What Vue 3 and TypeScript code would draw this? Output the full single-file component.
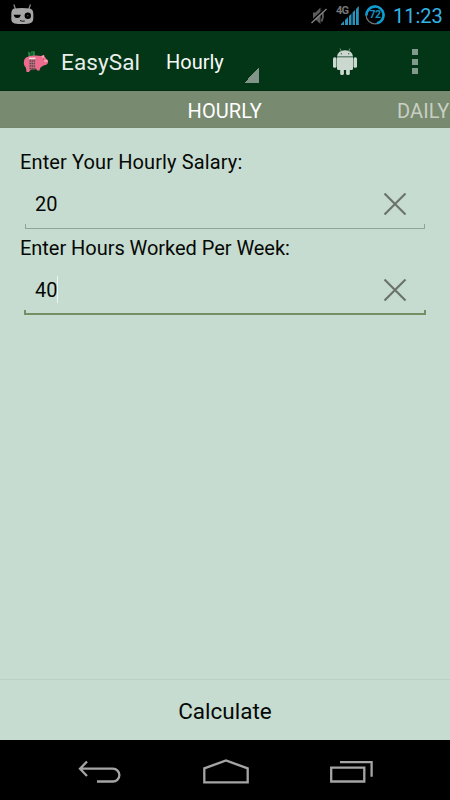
<script setup lang="ts">
import { ref } from 'vue'

interface Field {
  id: string
  label: string
  value: string
  focused: boolean
}

const fields = ref<Field[]>([
  { id: 'salary', label: 'Enter Your Hourly Salary:', value: '20', focused: false },
  { id: 'hours', label: 'Enter Hours Worked Per Week:', value: '40', focused: true },
])

function clearField(field: Field): void {
  field.value = ''
}
</script>

<template>
  <div class="screen">
    <header class="status">
      <svg class="cid" width="24" height="24" viewBox="0 0 24 24">
        <path d="M3.8 4.500 5.500 9M20.500 4.500 18.800 9" stroke="#8f8f8f" stroke-width="1.200" />
        <path d="M4 8.500Q12 7.700 20 8.500Q23.300 9.300 23.300 14V19Q23 22.500 19.500 23.500Q12 24.800 4.500 23.500Q1.300 22.500 1.300 19V14Q1.300 9.300 4 8.500Z" fill="#a6a6a6" />
        <path d="M4.500 15.300H10A2.800 2.500 0 0 1 4.500 15.300Z" fill="#000" stroke="#000" stroke-width="1.300" />
        <circle cx="17.800" cy="15.700" r="3.200" fill="#000" />
        <circle cx="17.800" cy="15.700" r=".7" fill="#555" />
        <path d="M10 20.500Q12.500 21.700 14.800 21" stroke="#111" fill="none" />
      </svg>
      <div class="indicators">
        <svg class="mute" width="17" height="18" viewBox="0 0 17 18">
          <path d="M2 5.500H4.500L9.500 .5V17L5 13H2Z" fill="#5d5d5d" />
          <path d="M10.500 3.500Q13.500 8.500 10.500 14.500" fill="none" stroke="#5d5d5d" stroke-width="1.800" />
          <path d="M0 14.500 14.500 1" stroke="#000" stroke-width="1.500" />
          <path d="M.5 16 15.500 2" stroke="#858585" stroke-width="1.300" />
        </svg>
        <div class="signal">
          <span>4G</span>
          <svg width="24" height="20" viewBox="0 0 24 20">
            <path d="M5 20V19L8 16V20ZM9 20V15L12 12V20ZM13 20V11L15.500 8.500V20ZM16.500 20V7.500L19 5V20ZM20 20V4L22.800 1V20Z" fill="#2b91b8" />
          </svg>
        </div>
        <div class="battery">
          <svg width="20" height="20" viewBox="0 0 20 20">
            <circle cx="10" cy="10" r="8.900" fill="none" stroke="#707070" stroke-width="1.200" />
            <path d="M1.500 10.500A8.500 8.500 0 1 1 12 18.300" fill="none" stroke="#0d9bd2" stroke-width="2.600" />
          </svg>
          <span>72</span>
        </div>
        <span class="clock">11:23</span>
      </div>
    </header>

    <div class="action-bar">
      <svg class="pig" width="26" height="24" viewBox="0 0 26 24">
        <path d="M5 2.500 8 4 7.500 8H5.500ZM8 2.500 11.700 2 12 7H8Z" fill="#28863e" />
        <path d="M7 4.500 10 3V7H7Z" fill="#116231" />
        <path d="M3 8.500Q7 6 13 6.500L18 7 21 5.800 21.700 8Q23 8.500 23.500 10.500L25 11V14Q24 16 20.500 16.500L17.500 18.500 16.500 21.500H14L13 19.500H9L7 21.500 6 23H3.500L3 19Q0 15.500 1 12Q1 10 3 8.500Z" fill="#ed6b8c" />
        <path d="M18 8 20.500 6 21.500 9ZM21 11 24 10.500 24.500 13H21.500Z" fill="#f5a5b5" />
        <rect x="6" y="8.500" width="6.500" height="12" fill="#c67586" />
        <path d="M6 9.300H12.500" stroke="#f7d8de" stroke-width="1.500" />
        <path d="M6.500 12H12M6.500 14.500H12M6.500 17H12M6.500 19.500H12" stroke="#67434e" stroke-width="1.300" stroke-dasharray="1.500 .5" />
        <circle cx="20.300" cy="10.300" r=".5" fill="#92445c" />
      </svg>
      <h1>EasySal</h1>
      <button class="spinner">Hourly</button>
      <svg class="droid" width="24" height="27" viewBox="0 0 24 27">
        <g fill="#cbd8d0">
          <path d="M4 8.500Q4.500 2.500 12 2.200Q19.500 2.500 20 8.500Z" />
          <path d="M4 9.200H20V20.500Q20 22 18.500 22H5.500Q4 22 4 20.500Z" />
          <rect x="0" y="9.200" width="3.500" height="10.500" rx="1.500" />
          <rect x="20.500" y="9.200" width="3.500" height="10.500" rx="1.500" />
          <rect x="7.200" y="20" width="3.700" height="7" rx="1.500" />
          <rect x="13.100" y="20" width="3.700" height="7" rx="1.500" />
        </g>
        <path d="M8.500 3.500 7 .5M15.500 3.500 17 .5" stroke="#9eafa3" stroke-width=".8" />
        <circle cx="8.300" cy="5.700" r=".7" fill="#47674f" />
        <circle cx="15.700" cy="5.700" r=".7" fill="#47674f" />
      </svg>
      <button class="overflow" aria-label="More options"><i /><i /><i /></button>
    </div>

    <nav class="tabs">
      <span class="current">HOURLY</span>
      <span class="next">DAILY</span>
    </nav>

    <main class="form">
      <div v-for="field in fields" :key="field.id" class="field" :class="field.id">
        <label>{{ field.label }}</label>
        <div class="entry" :class="{ focused: field.focused }">
          <span class="value">{{ field.value }}</span>
          <button class="clear" aria-label="Clear" @click="clearField(field)">
            <svg width="24" height="24" viewBox="0 0 24 24">
              <path d="M1.500 1.500 22.500 22.500M22.500 1.500 1.500 22.500" stroke="#6c736f" stroke-width="2.200" />
            </svg>
          </button>
        </div>
      </div>
    </main>

    <button class="calculate">Calculate</button>

    <footer class="system-nav">
      <svg width="43" height="24" viewBox="0 0 43 24">
        <path d="M9 1.500 2 8.700 9 16M2 8.700H35A6.200 6.200 0 0 1 35 21.500H19" />
      </svg>
      <svg width="46" height="26" viewBox="0 0 46 26">
        <path d="M1.300 23.400V9.300L23 1.500 44.700 9.300V23.400Z" />
      </svg>
      <svg width="43" height="24" viewBox="0 0 43 24">
        <path d="M1.200 7.700H34.300V21.500H1.200ZM10 2.200H41.600V16.800" />
      </svg>
    </footer>
  </div>
</template>

<style>
body {
  margin: 0;
  background: #000;
}
</style>

<style scoped>
.screen {
  width: 450px;
  height: 800px;
  display: flex;
  flex-direction: column;
  overflow: hidden;
  background: #c7dcd0;
  color: #050805;
  font: 20px/24px Roboto, sans-serif;
}
button {
  font: inherit;
  color: inherit;
  background: none;
  border: 0;
  padding: 0;
}
svg {
  display: block;
  flex: none;
}
.status {
  height: 31px;
  flex: none;
  display: flex;
  justify-content: space-between;
  background: #000;
}
.cid {
  margin-left: 10px;
}
.indicators {
  display: flex;
  width: 139px;
}
.mute {
  margin-top: 7px;
}
.signal {
  display: grid;
  width: 24px;
  margin-left: 8px;
}
.signal > * {
  grid-area: 1 / 1;
}
.signal span {
  font: bold 11px/12px Roboto, sans-serif;
  letter-spacing: -0.8px;
  color: #777;
  margin-top: 5px;
}
.signal svg {
  margin-top: 5px;
}
.battery {
  display: grid;
  width: 20px;
  height: 20px;
  margin: 5px 0 0 5px;
}
.battery > * {
  grid-area: 1 / 1;
}
.battery span {
  place-self: center;
  font: bold 10.5px/20px Roboto, sans-serif;
  letter-spacing: -0.4px;
  color: #1691c1;
}
.clock {
  margin: 4px 0 0 8px;
  color: #33b5e5;
  white-space: nowrap;
}
.action-bar {
  height: 60px;
  flex: none;
  display: flex;
  align-items: center;
  box-sizing: border-box;
  border-bottom: 1px solid #062b14;
  background: #033517;
  color: #f7faf7;
}
.pig {
  margin-left: 23px;
}
h1 {
  width: 93px;
  margin: 2px 0 0 12px;
  font-size: 22.5px;
  font-weight: 400;
  letter-spacing: 0.1px;
  color: #e8eee9;
}
.spinner {
  width: 105px;
  height: 45px;
  display: flex;
  align-items: center;
  padding: 2px 0 0 12px;
  box-sizing: border-box;
  background: linear-gradient(135deg, transparent 50%, #819588 50%) right bottom / 15px 15px no-repeat;
}
.droid {
  margin: 2px 0 0 74px;
}
.overflow {
  margin: 2px 0 0 55px;
  display: grid;
  gap: 3.5px;
}
.overflow i {
  width: 6px;
  height: 6px;
  background: #819a8b;
}
.tabs {
  height: 37px;
  flex: none;
  display: grid;
  grid-template-columns: 397px 53px;
  align-items: center;
  box-sizing: border-box;
  border-bottom: 1px solid #73876c;
  background: #788a6f;
  color: #fff;
}
.tabs span {
  margin-top: 3px;
  white-space: nowrap;
  letter-spacing: 0.12px;
}
.current {
  padding-left: 187.500px;
}
.next {
  color: #c8d0c4;
}
.form {
  flex: 1;
  padding: 22px 20px 0;
}
.field {
  height: 86px;
}
.field label {
  display: block;
}
.salary label {
  letter-spacing: 0.12px;
}
.hours label {
  letter-spacing: -0.04px;
}
.entry {
  height: 53px;
  margin: 2px 5px 0;
  display: flex;
  align-items: center;
  justify-content: space-between;
  box-sizing: border-box;
  padding: 2px 18px 0 10px;
  background:
    linear-gradient(#91a299, #91a299) left bottom / 1px 5px no-repeat,
    linear-gradient(#91a299, #91a299) right bottom / 1px 5px no-repeat,
    linear-gradient(#91a299, #91a299) bottom / 100% 1px no-repeat;
}
.value {
  padding: 2px 0 1px;
}
.focused {
  margin: 2px 4px 0;
  padding: 2px 19px 0 11px;
  background:
    linear-gradient(#758e63, #758e63) left bottom / 2px 5px no-repeat,
    linear-gradient(#758e63, #758e63) right bottom / 2px 5px no-repeat,
    linear-gradient(#758e63, #758e63) bottom / 100% 2px no-repeat;
}
.focused .value {
  border-right: 1px solid #eef5f0;
}
.calculate {
  height: 61px;
  flex: none;
  padding-top: 2px;
  border-top: 1px solid #bbcfc3;
  font-size: 22.5px;
}
.system-nav {
  height: 60px;
  flex: none;
  display: flex;
  justify-content: space-between;
  align-items: center;
  box-sizing: border-box;
  padding: 3px 77px 0 78px;
  background: #000;
}
.system-nav path {
  fill: none;
  stroke: #a5a5a5;
  stroke-width: 2.3;
}
</style>
